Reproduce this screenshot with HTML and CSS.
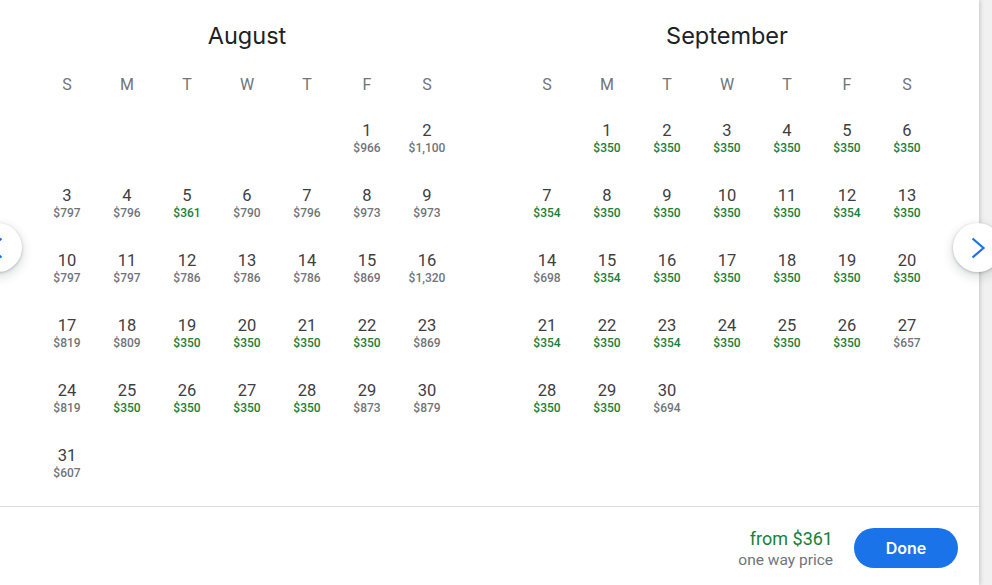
FILE: index.html
```html
<!DOCTYPE html>
<html lang="en">
<head>
<meta charset="utf-8">
<title>Calendar</title>
<link rel="stylesheet" href="styles.css">
</head>
<body>
<div class="panel">
  <div class="calendar">
    <section class="month">
      <h2 class="title">August</h2>
      <div class="weekdays"><span>S</span><span>M</span><span>T</span><span>W</span><span>T</span><span>F</span><span>S</span></div>
      <div class="days">
        <div class="day"></div><div class="day"></div><div class="day"></div><div class="day"></div><div class="day"></div>
        <div class="day"><span class="num">1</span><span class="price">$966</span></div>
        <div class="day"><span class="num">2</span><span class="price">$1,100</span></div>
        <div class="day"><span class="num">3</span><span class="price">$797</span></div>
        <div class="day"><span class="num">4</span><span class="price">$796</span></div>
        <div class="day"><span class="num">5</span><span class="price low">$361</span></div>
        <div class="day"><span class="num">6</span><span class="price">$790</span></div>
        <div class="day"><span class="num">7</span><span class="price">$796</span></div>
        <div class="day"><span class="num">8</span><span class="price">$973</span></div>
        <div class="day"><span class="num">9</span><span class="price">$973</span></div>
        <div class="day"><span class="num">10</span><span class="price">$797</span></div>
        <div class="day"><span class="num">11</span><span class="price">$797</span></div>
        <div class="day"><span class="num">12</span><span class="price">$786</span></div>
        <div class="day"><span class="num">13</span><span class="price">$786</span></div>
        <div class="day"><span class="num">14</span><span class="price">$786</span></div>
        <div class="day"><span class="num">15</span><span class="price">$869</span></div>
        <div class="day"><span class="num">16</span><span class="price">$1,320</span></div>
        <div class="day"><span class="num">17</span><span class="price">$819</span></div>
        <div class="day"><span class="num">18</span><span class="price">$809</span></div>
        <div class="day"><span class="num">19</span><span class="price low">$350</span></div>
        <div class="day"><span class="num">20</span><span class="price low">$350</span></div>
        <div class="day"><span class="num">21</span><span class="price low">$350</span></div>
        <div class="day"><span class="num">22</span><span class="price low">$350</span></div>
        <div class="day"><span class="num">23</span><span class="price">$869</span></div>
        <div class="day"><span class="num">24</span><span class="price">$819</span></div>
        <div class="day"><span class="num">25</span><span class="price low">$350</span></div>
        <div class="day"><span class="num">26</span><span class="price low">$350</span></div>
        <div class="day"><span class="num">27</span><span class="price low">$350</span></div>
        <div class="day"><span class="num">28</span><span class="price low">$350</span></div>
        <div class="day"><span class="num">29</span><span class="price">$873</span></div>
        <div class="day"><span class="num">30</span><span class="price">$879</span></div>
        <div class="day"><span class="num">31</span><span class="price">$607</span></div>
      </div>
    </section>
    <section class="month">
      <h2 class="title">September</h2>
      <div class="weekdays"><span>S</span><span>M</span><span>T</span><span>W</span><span>T</span><span>F</span><span>S</span></div>
      <div class="days">
        <div class="day"></div>
        <div class="day"><span class="num">1</span><span class="price low">$350</span></div>
        <div class="day"><span class="num">2</span><span class="price low">$350</span></div>
        <div class="day"><span class="num">3</span><span class="price low">$350</span></div>
        <div class="day"><span class="num">4</span><span class="price low">$350</span></div>
        <div class="day"><span class="num">5</span><span class="price low">$350</span></div>
        <div class="day"><span class="num">6</span><span class="price low">$350</span></div>
        <div class="day"><span class="num">7</span><span class="price low">$354</span></div>
        <div class="day"><span class="num">8</span><span class="price low">$350</span></div>
        <div class="day"><span class="num">9</span><span class="price low">$350</span></div>
        <div class="day"><span class="num">10</span><span class="price low">$350</span></div>
        <div class="day"><span class="num">11</span><span class="price low">$350</span></div>
        <div class="day"><span class="num">12</span><span class="price low">$354</span></div>
        <div class="day"><span class="num">13</span><span class="price low">$350</span></div>
        <div class="day"><span class="num">14</span><span class="price">$698</span></div>
        <div class="day"><span class="num">15</span><span class="price low">$354</span></div>
        <div class="day"><span class="num">16</span><span class="price low">$350</span></div>
        <div class="day"><span class="num">17</span><span class="price low">$350</span></div>
        <div class="day"><span class="num">18</span><span class="price low">$350</span></div>
        <div class="day"><span class="num">19</span><span class="price low">$350</span></div>
        <div class="day"><span class="num">20</span><span class="price low">$350</span></div>
        <div class="day"><span class="num">21</span><span class="price low">$354</span></div>
        <div class="day"><span class="num">22</span><span class="price low">$350</span></div>
        <div class="day"><span class="num">23</span><span class="price low">$354</span></div>
        <div class="day"><span class="num">24</span><span class="price low">$350</span></div>
        <div class="day"><span class="num">25</span><span class="price low">$350</span></div>
        <div class="day"><span class="num">26</span><span class="price low">$350</span></div>
        <div class="day"><span class="num">27</span><span class="price">$657</span></div>
        <div class="day"><span class="num">28</span><span class="price low">$350</span></div>
        <div class="day"><span class="num">29</span><span class="price low">$350</span></div>
        <div class="day"><span class="num">30</span><span class="price">$694</span></div>
      </div>
    </section>
  </div>
  <footer class="footer">
    <div class="summary">
      <div class="from">from $361</div>
      <div class="kind">one way price</div>
    </div>
    <button class="done">Done</button>
  </footer>
  <button class="nav nav-prev" aria-label="Previous">
    <svg viewBox="0 0 24 24" width="24" height="24"><polyline points="17.5,2.5 6.5,12 17.5,21.5"/></svg>
  </button>
  <button class="nav nav-next" aria-label="Next">
    <svg viewBox="0 0 24 24" width="24" height="24"><polyline points="6.5,2.5 17.5,12 6.5,21.5"/></svg>
  </button>
</div>
</body>
</html>
```
FILE: styles.css
```css
html, body {
  margin: 0;
  padding: 0;
  height: 100%;
  overflow: hidden;
}
body {
  background: #f1f1f1;
  font-family: Roboto, "Liberation Sans", Arial, sans-serif;
}
.panel {
  position: relative;
  width: 979px;
  height: 585px;
  background: #fff;
  box-shadow: 1px 0 4px rgba(60, 64, 67, 0.25);
  display: flex;
  flex-direction: column;
}
.calendar {
  height: 506px;
  display: flex;
  gap: 60px;
  padding-left: 37px;
  padding-top: 22px;
  box-sizing: border-box;
}
.month {
  width: 420px;
}
.title {
  margin: 0;
  font-family: Inter, "Open Sans", sans-serif;
  font-weight: 400;
  font-size: 23.5px;
  line-height: 28px;
  color: #202124;
  text-align: center;
}
.weekdays {
  margin-top: 25px;
  display: grid;
  grid-template-columns: repeat(7, 60px);
  height: 20px;
}
.weekdays span {
  text-align: center;
  font-size: 16px;
  line-height: 20px;
  color: #70757a;
}
.days {
  margin-top: 19px;
  display: grid;
  grid-template-columns: repeat(7, 60px);
  grid-auto-rows: 65px;
}
.day {
  display: flex;
  flex-direction: column;
  align-items: center;
  padding-top: 7px;
  box-sizing: border-box;
}
.num {
  font-size: 16.5px;
  line-height: 20px;
  color: #3c4043;
}
.price {
  margin-top: -1px;
  font-size: 12px;
  line-height: 16px;
  color: #70757a;
  font-weight: 500;
}
.price.low {
  color: #188038;
}
.footer {
  flex: 1;
  border-top: 1px solid #dadce0;
  display: flex;
  align-items: flex-start;
  justify-content: flex-end;
  gap: 21px;
  padding: 21px 21px 0 0;
}
.summary {
  text-align: right;
}
.from {
  font-size: 18px;
  line-height: 22px;
  color: #188038;
}
.kind {
  font-size: 15.5px;
  line-height: 20px;
  color: #70757a;
}
.done {
  width: 104px;
  height: 40px;
  border: none;
  border-radius: 20px;
  background: #1a73e8;
  color: #fff;
  font-family: Inter, "Open Sans", sans-serif;
  font-weight: 600;
  font-size: 16px;
  padding: 0;
}
.nav {
  position: absolute;
  top: 223px;
  width: 49px;
  height: 49px;
  border-radius: 50%;
  border: none;
  background: #fff;
  padding: 0;
  display: flex;
  align-items: center;
  justify-content: center;
  box-shadow: 0 1px 3px rgba(60, 64, 67, 0.3), 0 4px 8px 3px rgba(60, 64, 67, 0.12);
}
.nav svg {
  fill: none;
  stroke: #1a73e8;
  stroke-width: 2.2;
}
.nav-prev {
  left: -27px;
}
.nav-prev svg {
  margin-left: -4px;
}
.nav-next {
  left: 953px;
}
```
